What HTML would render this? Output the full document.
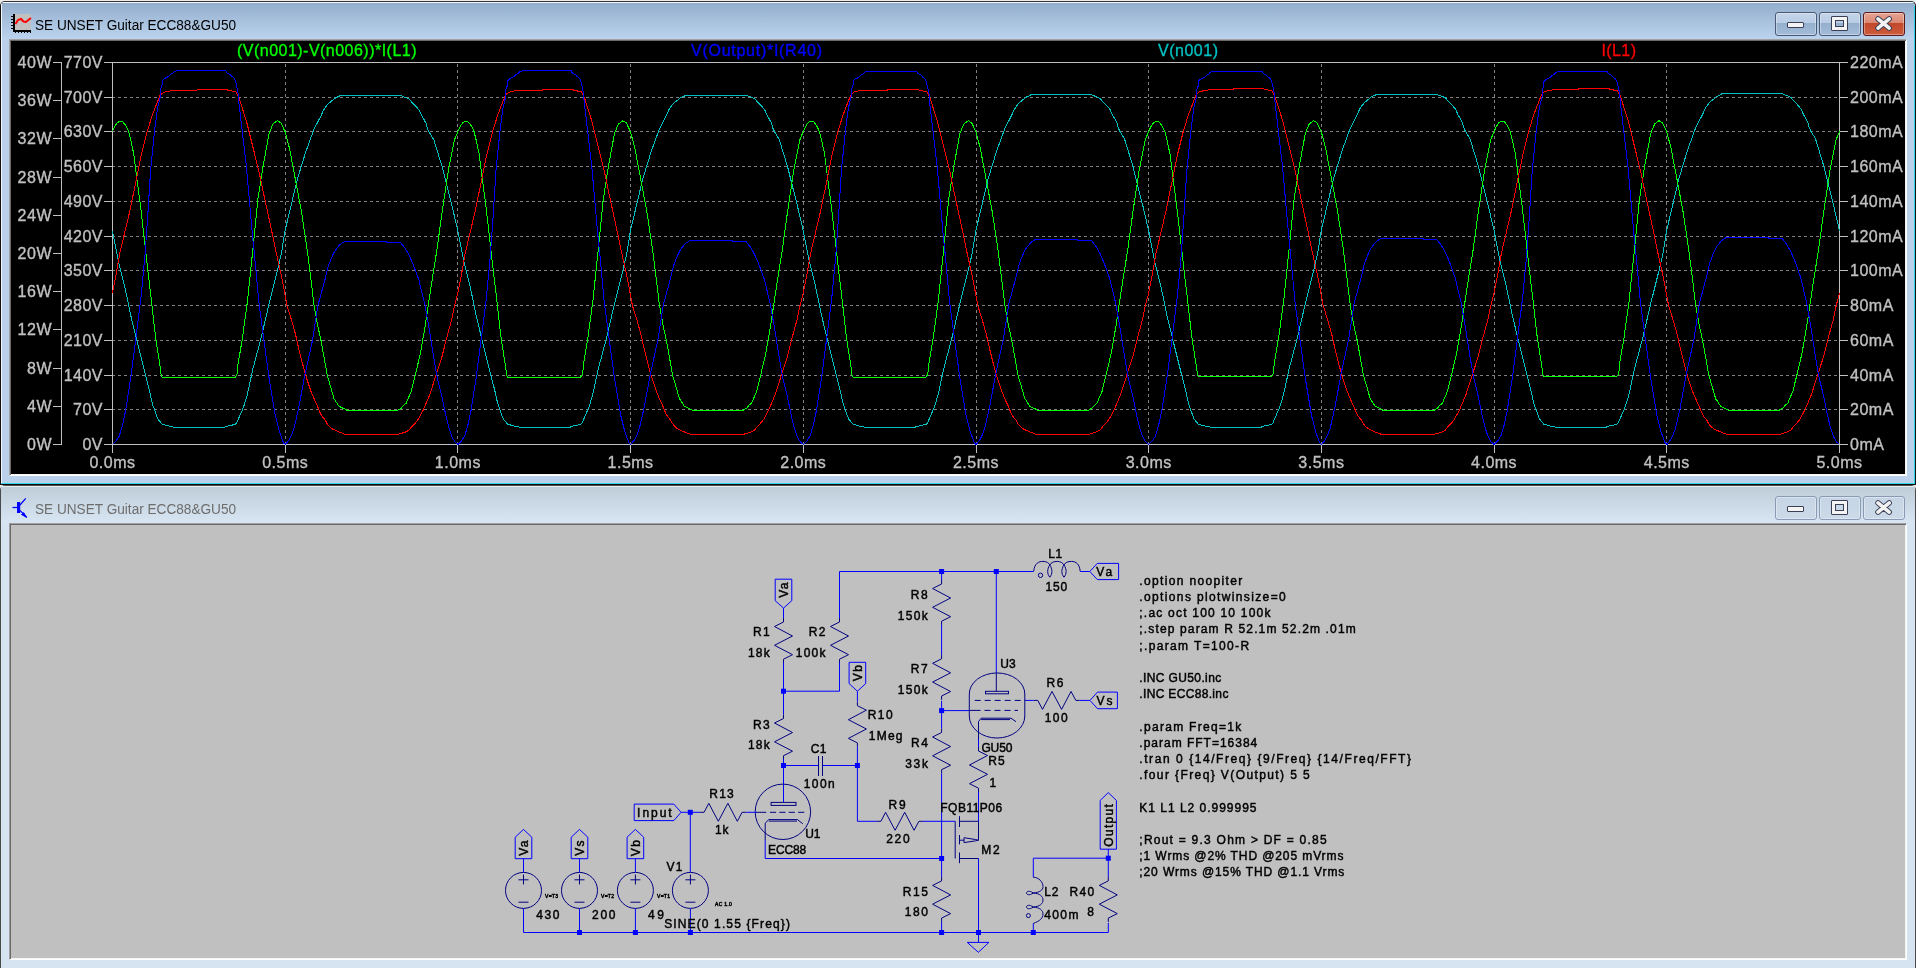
<!DOCTYPE html>
<html><head><meta charset="utf-8"><style>
*{margin:0;padding:0;box-sizing:border-box}
html,body{width:1916px;height:968px;overflow:hidden;background:#ececec;font-family:"Liberation Sans",sans-serif}
.win{position:absolute;left:0;width:1916px;border-radius:5px 5px 0 0}
.btn{position:absolute;width:42px;height:24px;border:1px solid #4a5a75;border-radius:3px;box-shadow:inset 0 0 0 1px rgba(255,255,255,0.35)}
.ic-min{position:absolute;left:11px;top:9px;width:17px;height:6px;background:#f4f4f4;border:1px solid #3a3f55;border-radius:1px}
.ic-max{position:absolute;left:11px;top:3px;width:17px;height:15px;border:1px solid #3a3f55;border-radius:1px;background:transparent;box-shadow:inset 0 0 0 3px #f4f4f4, inset 0 0 0 4px #3a3f55}
.title{position:absolute;left:35px;font-size:15px;white-space:pre;color:#000;transform:scaleX(0.912);transform-origin:0 0}
</style></head><body>
<!-- top window -->
<div style="position:absolute;left:0;top:1px;width:1916px;height:484px;background:#b9d1ea;border:1px solid #111;border-top-color:#333;border-bottom:none;border-radius:5px 5px 0 0;overflow:hidden">
  <div style="position:absolute;left:0;top:0;width:100%;height:1px;background:#f4f8fc"></div>
  <div style="position:absolute;left:0;top:0;width:1px;height:100%;background:#f4f8fc"></div>
  <div style="position:absolute;left:1px;top:1px;right:1px;height:37px;background:linear-gradient(#93aecd,#bcd4ee)"></div>
  <div style="position:absolute;right:0;top:4px;width:1px;bottom:0;background:#2ad6ee"></div>
  <div style="position:absolute;left:0;bottom:1px;width:100%;height:1px;background:#2ad6ee"></div>
  <div style="position:absolute;left:0;bottom:0;width:100%;height:1px;background:#1a0a0a"></div>
</div>
<div style="position:absolute;left:9px;top:39px;width:1898px;height:437px;background:#000;border:1px solid;border-color:#a0a0a0 #fff #fff #a0a0a0;box-shadow:inset 1px 1px 0 #696969, inset -1px -1px 0 #f4f4f4"></div>

<div class="btn" style="left:1775px;top:12px;background:linear-gradient(#c3d4e7 0%,#b9cde5 45%,#94afcd 46%,#a4bcd8 100%);border-color:#4a5a75"><div class="ic-min"></div></div>
<div class="btn" style="left:1819px;top:12px;background:linear-gradient(#c3d4e7 0%,#b9cde5 45%,#94afcd 46%,#a4bcd8 100%);border-color:#4a5a75"><div class="ic-max"></div></div>
<div class="btn" style="left:1863px;top:12px;width:42px;background:linear-gradient(#e8a493 0%,#d88872 45%,#c2472b 46%,#cd5c3c 100%);border-color:#5a1a1a"><svg width="40" height="22" style="position:absolute;left:0;top:0"><path d="M14,5.9 L25.2,15.1 M25.2,5.9 L14,15.1" stroke="#3a3f55" stroke-width="5.5" stroke-linecap="round"/><path d="M14,5.9 L25.2,15.1 M25.2,5.9 L14,15.1" stroke="#f2f2f2" stroke-width="3.6" stroke-linecap="round"/></svg></div>

<!-- bottom window -->
<div style="position:absolute;left:0;top:485px;width:1916px;height:483px;background:#d6e4f2;border:1px solid #4a4a4a;border-bottom:none;border-radius:5px 5px 0 0"></div>
<div style="position:absolute;left:1px;top:486px;width:1914px;height:1px;background:#e8eef4;border-radius:4px 4px 0 0"></div>
<div style="position:absolute;left:1px;top:487px;width:1914px;height:36px;background:linear-gradient(#bfcdd9,#d8e6f3)"></div>
<div style="position:absolute;left:9px;top:523px;width:1898px;height:437px;background:#c0c0c0;border:1px solid;border-color:#a0a0a0 #fff #fff #a0a0a0;box-shadow:inset 1px 1px 0 #696969, inset -1px -1px 0 #f4f4f4"></div>

<div class="btn" style="left:1775px;top:496px;background:linear-gradient(#c6d5e5 0%,#cbd9e8 100%);border-color:#8a9ab5"><div class="ic-min"></div></div>
<div class="btn" style="left:1819px;top:496px;background:linear-gradient(#c6d5e5 0%,#cbd9e8 100%);border-color:#8a9ab5"><div class="ic-max"></div></div>
<div class="btn" style="left:1863px;top:496px;width:42px;background:linear-gradient(#c6d5e5 0%,#cbd9e8 100%);border-color:#8a9ab5"><svg width="40" height="22" style="position:absolute;left:0;top:0"><path d="M14,5.9 L25.2,15.1 M25.2,5.9 L14,15.1" stroke="#3a3f55" stroke-width="5.5" stroke-linecap="round"/><path d="M14,5.9 L25.2,15.1 M25.2,5.9 L14,15.1" stroke="#f2f2f2" stroke-width="3.6" stroke-linecap="round"/></svg></div>

<svg width="1916" height="968" style="position:absolute;left:0;top:0;will-change:transform">
<g style="font-family:'Liberation Sans',sans-serif;font-size:15.4px">
<text x="0" y="0" transform="translate(35,29.8) scale(0.885,1)" fill="#000">SE UNSET Guitar ECC88&amp;GU50</text>
<text x="0" y="0" transform="translate(35,513.8) scale(0.885,1)" fill="#6d6d6d">SE UNSET Guitar ECC88&amp;GU50</text>
</g>
<!-- plot icon -->
<g>
<rect x="15" y="14" width="16" height="16" fill="#c0c0c0"/>
<path d="M14,14V31H31" stroke="#000" stroke-width="2" fill="none"/>
<path d="M11,16.5h2M11,19.5h2M11,22.5h2M11,25.5h2M11,28.5h2M15.5,33v-2M18.5,33v-2M21.5,33v-2M24.5,33v-2M27.5,33v-2M30.5,33v-2" stroke="#000" stroke-width="1" fill="none"/>
<path d="M15.5,24 L18,20 L21,19 L23.5,21.5 L26,22 L29,19.5 L31,18" stroke="#ff0000" stroke-width="2" fill="none"/>
</g>
<!-- schematic icon -->
<g stroke="#0000ff" fill="none">
<path d="M12.5,507.5H17.5" stroke-width="1.3"/>
<rect x="17" y="502" width="3.2" height="11" fill="#0000ff" stroke="none"/>
<path d="M20,505L25.8,498.4M20,510.3L26.9,517.5" stroke-width="1.2"/>
<path d="M21.5,514.5l4.5,2.5l-2.2,-4.3z" fill="#0000ff" stroke-width="1"/>
</g>
<path d="M112,97.5H1839M112,131.5H1839M112,166.5H1839M112,201.5H1839M112,236.5H1839M112,270.5H1839M112,305.5H1839M112,340.5H1839M112,375.5H1839M112,409.5H1839" stroke="#808080" stroke-width="1" stroke-dasharray="3,3" fill="none" shape-rendering="crispEdges"/>
<path d="M285.5,62V444M457.5,62V444M630.5,62V444M803.5,62V444M976.5,62V444M1148.5,62V444M1321.5,62V444M1494.5,62V444M1666.5,62V444" stroke="#808080" stroke-width="1" stroke-dasharray="3,3" stroke-dashoffset="4" fill="none" shape-rendering="crispEdges"/>
<path d="M112.5,62.5H1839.5V444.5H112.5ZM104,62.5H112.5M1839.5,62.5H1848M104,97.5H112.5M1839.5,97.5H1848M104,131.5H112.5M1839.5,131.5H1848M104,166.5H112.5M1839.5,166.5H1848M104,201.5H112.5M1839.5,201.5H1848M104,236.5H112.5M1839.5,236.5H1848M104,270.5H112.5M1839.5,270.5H1848M104,305.5H112.5M1839.5,305.5H1848M104,340.5H112.5M1839.5,340.5H1848M104,375.5H112.5M1839.5,375.5H1848M104,409.5H112.5M1839.5,409.5H1848M104,444.5H112.5M1839.5,444.5H1848M53,62.5H61.5M53,100.5H61.5M53,138.5H61.5M53,177.5H61.5M53,215.5H61.5M53,253.5H61.5M53,291.5H61.5M53,329.5H61.5M53,368.5H61.5M53,406.5H61.5M53,444.5H61.5M61.5,62.5V444.5M112.5,444.5V453M285.5,444.5V453M457.5,444.5V453M630.5,444.5V453M803.5,444.5V453M976.5,444.5V453M1148.5,444.5V453M1321.5,444.5V453M1494.5,444.5V453M1666.5,444.5V453M1839.5,444.5V453" stroke="#c0c0c0" stroke-width="1" fill="none" shape-rendering="crispEdges"/>
<g fill="#c0c0c0" stroke="#c0c0c0" stroke-width="0.35" style="font-family:'Liberation Sans',sans-serif;font-size:16px;letter-spacing:0.5px"><text x="103" y="68" text-anchor="end">770V</text><text x="1850" y="68">220mA</text><text x="103" y="103" text-anchor="end">700V</text><text x="1850" y="103">200mA</text><text x="103" y="137" text-anchor="end">630V</text><text x="1850" y="137">180mA</text><text x="103" y="172" text-anchor="end">560V</text><text x="1850" y="172">160mA</text><text x="103" y="207" text-anchor="end">490V</text><text x="1850" y="207">140mA</text><text x="103" y="242" text-anchor="end">420V</text><text x="1850" y="242">120mA</text><text x="103" y="276" text-anchor="end">350V</text><text x="1850" y="276">100mA</text><text x="103" y="311" text-anchor="end">280V</text><text x="1850" y="311">80mA</text><text x="103" y="346" text-anchor="end">210V</text><text x="1850" y="346">60mA</text><text x="103" y="381" text-anchor="end">140V</text><text x="1850" y="381">40mA</text><text x="103" y="415" text-anchor="end">70V</text><text x="1850" y="415">20mA</text><text x="103" y="450" text-anchor="end">0V</text><text x="1850" y="450">0mA</text><text x="52" y="68" text-anchor="end">40W</text><text x="52" y="106" text-anchor="end">36W</text><text x="52" y="144" text-anchor="end">32W</text><text x="52" y="183" text-anchor="end">28W</text><text x="52" y="221" text-anchor="end">24W</text><text x="52" y="259" text-anchor="end">20W</text><text x="52" y="297" text-anchor="end">16W</text><text x="52" y="335" text-anchor="end">12W</text><text x="52" y="374" text-anchor="end">8W</text><text x="52" y="412" text-anchor="end">4W</text><text x="52" y="450" text-anchor="end">0W</text><text x="112.5" y="468" text-anchor="middle">0.0ms</text><text x="285.2" y="468" text-anchor="middle">0.5ms</text><text x="457.9" y="468" text-anchor="middle">1.0ms</text><text x="630.6" y="468" text-anchor="middle">1.5ms</text><text x="803.3" y="468" text-anchor="middle">2.0ms</text><text x="976.0" y="468" text-anchor="middle">2.5ms</text><text x="1148.7" y="468" text-anchor="middle">3.0ms</text><text x="1321.4" y="468" text-anchor="middle">3.5ms</text><text x="1494.1" y="468" text-anchor="middle">4.0ms</text><text x="1666.8" y="468" text-anchor="middle">4.5ms</text><text x="1839.5" y="468" text-anchor="middle">5.0ms</text></g>
<g style="font-family:'Liberation Sans',sans-serif;font-size:16px;letter-spacing:0.5px" stroke-width="0.35"><text x="237" y="56" fill="#00ff00" stroke="#00ff00" textLength="180" lengthAdjust="spacing">(V(n001)-V(n006))*I(L1)</text><text x="691" y="56" fill="#0000ff" stroke="#0000ff" textLength="131.5" lengthAdjust="spacing">V(Output)*I(R40)</text><text x="1158" y="56" fill="#00c0c0" stroke="#00c0c0" textLength="60.5" lengthAdjust="spacing">V(n001)</text><text x="1601.5" y="56" fill="#ff0000" stroke="#ff0000" textLength="35" lengthAdjust="spacing">I(L1)</text></g>
<path d="M112.5,231.0 L118.6,262.0 L124.8,286.8 L131.0,316.5 L136.9,340.9 L143.1,365.7 L150.4,394.6 L151.4,399.7 L152.9,405.5 L154.3,409.1 L156.5,415.6 L158.0,419.2 L160.8,422.5 L162.3,424.3 L166.6,425.4 L170.2,426.5 L176.4,427.5 L224.8,427.5 L225.2,426.5 L231.0,425.4 L235.3,424.3 L236.8,422.8 L238.9,417.8 L241.1,412.7 L243.3,407.7 L245.4,401.2 L247.3,394.6 L249.1,386.7 L252.6,369.9 L260.9,338.9 L269.1,303.7 L277.4,270.7 L281.5,253.0 L285.0,231.0 L297.4,179.0 L305.7,152.1 L313.9,129.4 L320.3,117.1 L321.7,114.3 L323.4,110.3 L325.7,106.8 L328.6,103.4 L330.9,101.6 L334.6,98.5 L336.6,97.3 L338.9,96.5 L340.1,95.5 L400.9,95.5 L402.7,96.5 L406.1,97.6 L409.6,99.4 L411.3,101.6 L416.4,106.8 L419.3,110.3 L421.6,115.4 L423.9,119.4 L426.2,123.5 L427.3,128.1 L429.4,132.6 L433.8,139.7 L442.1,166.6 L448.3,191.4 L452.0,206.0 L457.9,231.0 L464.0,262.0 L470.2,286.8 L476.4,316.5 L482.3,340.9 L488.5,365.7 L495.8,394.6 L496.8,399.7 L498.3,405.5 L499.7,409.1 L501.9,415.6 L503.4,419.2 L506.2,422.5 L507.7,424.3 L512.0,425.4 L515.6,426.5 L521.8,427.5 L570.2,427.5 L570.6,426.5 L576.4,425.4 L580.7,424.3 L582.2,422.8 L584.3,417.8 L586.5,412.7 L588.7,407.7 L590.8,401.2 L592.7,394.6 L594.5,386.7 L598.0,369.9 L606.3,338.9 L614.5,303.7 L622.8,270.7 L626.9,253.0 L630.4,230.9 L642.8,178.8 L651.1,151.8 L659.3,129.1 L665.7,116.8 L667.1,113.9 L668.8,109.9 L671.1,106.4 L674.0,103.0 L676.3,101.2 L680.0,98.1 L682.0,96.9 L684.3,96.1 L685.5,95.1 L746.3,95.1 L748.1,96.1 L751.5,97.2 L755.0,99.0 L756.7,101.2 L761.8,106.4 L764.7,109.9 L767.0,115.0 L769.3,119.1 L771.6,123.2 L772.7,127.8 L774.8,132.3 L779.2,139.4 L787.5,166.4 L793.7,191.2 L797.4,205.9 L803.3,230.9 L809.4,262.0 L815.6,286.8 L821.8,316.5 L827.7,340.9 L833.9,365.7 L841.2,394.6 L842.2,399.7 L843.7,405.5 L845.1,409.1 L847.3,415.6 L848.8,419.2 L851.6,422.5 L853.1,424.3 L857.4,425.4 L861.0,426.5 L867.2,427.5 L915.6,427.5 L916.0,426.5 L921.8,425.4 L926.1,424.3 L927.6,422.8 L929.7,417.8 L931.9,412.7 L934.1,407.7 L936.2,401.2 L938.1,394.6 L939.9,386.7 L943.4,369.9 L951.7,338.9 L959.9,303.7 L968.2,270.7 L972.3,253.0 L975.8,230.9 L988.2,178.6 L996.5,151.6 L1004.7,128.8 L1011.1,116.4 L1012.5,113.6 L1014.2,109.6 L1016.5,106.1 L1019.4,102.6 L1021.7,100.8 L1025.4,97.7 L1027.4,96.5 L1029.7,95.7 L1030.9,94.7 L1091.7,94.7 L1093.5,95.7 L1096.9,96.8 L1100.4,98.6 L1102.1,100.8 L1107.2,106.1 L1110.1,109.6 L1112.4,114.7 L1114.7,118.7 L1117.0,122.8 L1118.1,127.5 L1120.2,132.0 L1124.6,139.1 L1132.9,166.1 L1139.1,191.1 L1142.8,205.7 L1148.7,230.9 L1154.8,262.0 L1161.0,286.8 L1167.2,316.5 L1173.1,340.9 L1179.3,365.7 L1186.6,394.6 L1187.6,399.7 L1189.1,405.5 L1190.5,409.1 L1192.7,415.6 L1194.2,419.2 L1197.0,422.5 L1198.5,424.3 L1202.8,425.4 L1206.4,426.5 L1212.6,427.5 L1261.0,427.5 L1261.4,426.5 L1267.2,425.4 L1271.5,424.3 L1273.0,422.8 L1275.1,417.8 L1277.3,412.7 L1279.5,407.7 L1281.6,401.2 L1283.5,394.6 L1285.3,386.7 L1288.8,369.9 L1297.1,338.9 L1305.3,303.7 L1313.6,270.7 L1317.7,252.9 L1321.2,230.8 L1333.6,178.4 L1341.9,151.3 L1350.1,128.4 L1356.5,116.1 L1357.9,113.2 L1359.6,109.2 L1361.9,105.7 L1364.8,102.3 L1367.1,100.4 L1370.8,97.3 L1372.8,96.1 L1375.1,95.3 L1376.3,94.3 L1437.1,94.3 L1438.9,95.3 L1442.3,96.4 L1445.8,98.2 L1447.5,100.4 L1452.6,105.7 L1455.5,109.2 L1457.8,114.3 L1460.1,118.4 L1462.4,122.5 L1463.5,127.1 L1465.6,131.7 L1470.0,138.8 L1478.3,165.9 L1484.5,190.9 L1488.2,205.6 L1494.1,230.8 L1500.2,262.0 L1506.4,286.8 L1512.6,316.5 L1518.5,340.9 L1524.7,365.7 L1532.0,394.6 L1533.0,399.7 L1534.5,405.5 L1535.9,409.1 L1538.1,415.6 L1539.6,419.2 L1542.4,422.5 L1543.9,424.3 L1548.2,425.4 L1551.8,426.5 L1558.0,427.5 L1606.4,427.5 L1606.8,426.5 L1612.6,425.4 L1616.9,424.3 L1618.4,422.8 L1620.5,417.8 L1622.7,412.7 L1624.9,407.7 L1627.0,401.2 L1628.9,394.6 L1630.7,386.7 L1634.2,369.9 L1642.5,338.9 L1650.7,303.7 L1659.0,270.7 L1663.1,252.9 L1666.6,230.7 L1679.0,178.2 L1687.3,151.0 L1695.5,128.1 L1701.9,115.7 L1703.3,112.9 L1705.0,108.8 L1707.3,105.3 L1710.2,101.9 L1712.5,100.1 L1716.2,96.9 L1718.2,95.7 L1720.5,94.9 L1721.7,93.9 L1782.5,93.9 L1784.3,94.9 L1787.7,96.0 L1791.2,97.8 L1792.9,100.1 L1798.0,105.3 L1800.9,108.8 L1803.2,114.0 L1805.5,118.0 L1807.8,122.2 L1808.9,126.8 L1811.0,131.4 L1815.4,138.5 L1823.7,165.7 L1829.9,190.7 L1833.6,205.5 L1839.5,230.7" stroke="#00c0c0" stroke-width="1" fill="none" stroke-linejoin="round" shape-rendering="crispEdges"/>
<path d="M112.5,131.5 L115.0,126.0 L117.5,122.5 L120.3,121.1 L123.0,122.0 L126.0,126.0 L128.6,131.5 L131.0,141.0 L133.8,154.2 L136.9,179.0 L140.5,206.0 L144.4,240.0 L148.3,274.4 L150.8,295.0 L155.5,336.8 L160.1,366.4 L160.8,371.5 L161.2,375.5 L162.3,377.5 L235.0,377.5 L236.4,375.8 L237.5,371.9 L237.9,365.0 L242.3,338.9 L247.4,301.7 L252.6,252.0 L257.8,199.7 L263.0,166.6 L269.1,133.5 L273.0,124.0 L277.4,120.7 L281.0,123.0 L285.0,131.5 L289.4,148.0 L295.3,179.0 L301.5,212.0 L307.2,250.0 L311.0,280.0 L314.1,305.6 L317.9,326.5 L321.0,340.4 L324.9,362.1 L327.2,375.2 L331.1,388.4 L334.2,399.3 L335.1,400.0 L335.9,401.6 L338.0,404.7 L339.0,406.3 L341.1,407.3 L343.2,408.4 L345.8,409.5 L347.1,410.5 L397.7,410.5 L398.5,409.5 L401.1,408.4 L403.7,405.2 L406.3,403.1 L407.5,400.0 L411.2,391.5 L415.8,372.9 L420.5,352.8 L425.1,326.5 L428.2,305.6 L432.1,280.0 L436.9,250.0 L442.1,212.0 L448.3,170.7 L454.5,139.7 L457.9,131.5 L460.4,126.0 L462.9,122.5 L465.7,121.1 L468.4,122.0 L471.4,126.0 L474.0,131.5 L476.4,141.0 L479.2,154.2 L482.3,179.0 L485.9,206.0 L489.8,240.0 L493.7,274.4 L496.2,295.0 L500.9,336.7 L505.5,366.2 L506.2,371.3 L506.6,375.3 L507.7,377.2 L580.4,377.2 L581.8,375.6 L582.9,371.7 L583.3,364.8 L587.7,338.8 L592.8,301.7 L598.0,252.0 L603.2,199.7 L608.4,166.6 L614.5,133.5 L618.4,124.0 L622.8,120.7 L626.4,123.0 L630.4,131.5 L634.8,148.0 L640.7,179.0 L646.9,212.0 L652.6,250.0 L656.4,280.0 L659.5,305.6 L663.3,326.5 L666.4,340.4 L670.3,362.1 L672.6,375.2 L676.5,388.4 L679.6,399.3 L680.5,400.0 L681.3,401.6 L683.4,404.7 L684.4,406.3 L686.5,407.3 L688.6,408.4 L691.2,409.5 L692.5,410.5 L743.1,410.5 L743.9,409.5 L746.5,408.4 L749.1,405.2 L751.7,403.1 L752.9,400.0 L756.6,391.5 L761.2,372.9 L765.9,352.8 L770.5,326.5 L773.6,305.6 L777.5,280.0 L782.3,250.0 L787.5,212.0 L793.7,170.7 L799.9,139.7 L803.3,131.5 L805.8,126.0 L808.3,122.5 L811.1,121.1 L813.8,122.0 L816.8,126.0 L819.4,131.5 L821.8,141.0 L824.6,154.2 L827.7,179.0 L831.3,206.0 L835.2,240.0 L839.1,274.4 L841.6,295.0 L846.3,336.6 L850.9,366.0 L851.6,371.0 L852.0,375.0 L853.1,377.0 L925.8,377.0 L927.2,375.3 L928.3,371.4 L928.7,364.6 L933.1,338.6 L938.2,301.7 L943.4,252.0 L948.6,199.7 L953.8,166.6 L959.9,133.5 L963.8,124.0 L968.2,120.7 L971.8,123.0 L975.8,131.5 L980.2,148.0 L986.1,179.0 L992.3,212.0 L998.0,250.0 L1001.8,280.0 L1004.9,305.6 L1008.7,326.5 L1011.8,340.4 L1015.7,362.1 L1018.0,375.2 L1021.9,388.4 L1025.0,399.3 L1025.9,400.0 L1026.7,401.6 L1028.8,404.7 L1029.8,406.3 L1031.9,407.3 L1034.0,408.4 L1036.6,409.5 L1037.9,410.5 L1088.5,410.5 L1089.3,409.5 L1091.9,408.4 L1094.5,405.2 L1097.1,403.1 L1098.3,400.0 L1102.0,391.5 L1106.6,372.9 L1111.3,352.8 L1115.9,326.5 L1119.0,305.6 L1122.9,280.0 L1127.7,250.0 L1132.9,212.0 L1139.1,170.7 L1145.3,139.7 L1148.7,131.5 L1151.2,126.0 L1153.7,122.5 L1156.5,121.1 L1159.2,122.0 L1162.2,126.0 L1164.8,131.5 L1167.2,141.0 L1170.0,154.2 L1173.1,179.0 L1176.7,206.0 L1180.6,240.0 L1184.5,274.4 L1187.0,295.0 L1191.7,336.4 L1196.3,365.8 L1197.0,370.8 L1197.4,374.8 L1198.5,376.8 L1271.2,376.8 L1272.6,375.1 L1273.7,371.2 L1274.1,364.4 L1278.5,338.5 L1283.6,301.7 L1288.8,252.0 L1294.0,199.7 L1299.2,166.6 L1305.3,133.5 L1309.2,124.0 L1313.6,120.7 L1317.2,123.0 L1321.2,131.5 L1325.6,148.0 L1331.5,179.0 L1337.7,212.0 L1343.4,250.0 L1347.2,280.0 L1350.3,305.6 L1354.1,326.5 L1357.2,340.4 L1361.1,362.1 L1363.4,375.2 L1367.3,388.4 L1370.4,399.3 L1371.3,400.0 L1372.1,401.6 L1374.2,404.7 L1375.2,406.3 L1377.3,407.3 L1379.4,408.4 L1382.0,409.5 L1383.3,410.5 L1433.9,410.5 L1434.7,409.5 L1437.3,408.4 L1439.9,405.2 L1442.5,403.1 L1443.7,400.0 L1447.4,391.5 L1452.0,372.9 L1456.7,352.8 L1461.3,326.5 L1464.4,305.6 L1468.3,280.0 L1473.1,250.0 L1478.3,212.0 L1484.5,170.7 L1490.7,139.7 L1494.1,131.5 L1496.6,126.0 L1499.1,122.5 L1501.9,121.1 L1504.6,122.0 L1507.6,126.0 L1510.2,131.5 L1512.6,141.0 L1515.4,154.2 L1518.5,179.0 L1522.1,206.0 L1526.0,240.0 L1529.9,274.4 L1532.4,295.0 L1537.1,336.3 L1541.7,365.5 L1542.4,370.6 L1542.8,374.5 L1543.9,376.5 L1616.6,376.5 L1618.0,374.8 L1619.1,371.0 L1619.5,364.2 L1623.9,338.4 L1629.0,301.7 L1634.2,252.0 L1639.4,199.7 L1644.6,166.6 L1650.7,133.5 L1654.6,124.0 L1659.0,120.7 L1662.6,123.0 L1666.6,131.5 L1671.0,148.0 L1676.9,179.0 L1683.1,212.0 L1688.8,250.0 L1692.6,280.0 L1695.7,305.6 L1699.5,326.5 L1702.6,340.4 L1706.5,362.1 L1708.8,375.2 L1712.7,388.4 L1715.8,399.3 L1716.7,400.0 L1717.5,401.6 L1719.6,404.7 L1720.6,406.3 L1722.7,407.3 L1724.8,408.4 L1727.4,409.5 L1728.7,410.5 L1779.3,410.5 L1780.1,409.5 L1782.7,408.4 L1785.3,405.2 L1787.9,403.1 L1789.1,400.0 L1792.8,391.5 L1797.4,372.9 L1802.1,352.8 L1806.7,326.5 L1809.8,305.6 L1813.7,280.0 L1818.5,250.0 L1823.7,212.0 L1829.9,170.7 L1836.1,139.7 L1839.5,131.5" stroke="#00ff00" stroke-width="1" fill="none" stroke-linejoin="round" shape-rendering="crispEdges"/>
<path d="M112.5,293.0 L116.1,274.4 L119.8,253.3 L124.8,232.2 L129.8,211.2 L135.8,182.0 L141.0,156.3 L147.2,131.5 L152.4,115.0 L157.0,103.0 L160.0,95.5 L161.3,94.2 L163.3,92.5 L167.1,91.5 L172.9,90.5 L196.7,90.5 L197.2,89.5 L227.6,89.5 L228.0,90.5 L231.8,90.5 L232.2,91.5 L235.6,91.5 L236.4,93.0 L237.7,95.0 L238.5,96.7 L239.3,98.8 L246.4,121.1 L252.6,145.9 L258.8,170.7 L264.0,195.5 L271.2,228.6 L276.4,253.4 L282.3,280.0 L287.0,305.6 L291.6,320.3 L295.5,334.2 L298.6,348.1 L302.5,363.6 L305.6,375.2 L311.0,391.5 L315.5,402.1 L317.1,405.2 L318.1,407.8 L320.2,413.0 L322.3,416.7 L323.9,418.5 L325.4,420.4 L327.0,423.5 L328.6,425.6 L330.1,427.1 L331.7,428.4 L333.3,429.5 L335.4,430.3 L337.4,431.3 L340.1,432.4 L343.2,433.5 L345.3,434.5 L397.7,434.5 L400.6,433.5 L404.8,432.4 L406.9,431.3 L409.0,430.3 L411.5,427.0 L414.5,424.0 L418.2,419.4 L423.6,409.3 L429.8,394.6 L436.0,375.2 L442.2,355.9 L446.0,340.4 L451.5,320.3 L454.6,305.6 L457.9,293.0 L461.5,274.4 L465.2,253.3 L470.2,232.2 L475.2,211.1 L481.2,181.9 L486.4,156.1 L492.6,131.3 L497.8,114.8 L502.4,102.8 L505.4,95.3 L506.7,94.0 L508.7,92.3 L512.5,91.3 L518.3,90.3 L542.1,90.3 L542.6,89.2 L573.0,89.2 L573.4,90.3 L577.2,90.3 L577.6,91.3 L581.0,91.3 L581.8,92.8 L583.1,94.8 L583.9,96.5 L584.7,98.6 L591.8,120.9 L598.0,145.7 L604.2,170.6 L609.4,195.4 L616.6,228.6 L621.8,253.4 L627.7,280.0 L632.4,305.6 L637.0,320.3 L640.9,334.2 L644.0,348.1 L647.9,363.6 L651.0,375.2 L656.4,391.5 L660.9,402.1 L662.5,405.2 L663.5,407.8 L665.6,413.0 L667.7,416.7 L669.3,418.5 L670.8,420.4 L672.4,423.5 L674.0,425.6 L675.5,427.1 L677.1,428.4 L678.7,429.5 L680.8,430.3 L682.8,431.3 L685.5,432.4 L688.6,433.5 L690.7,434.5 L743.1,434.5 L746.0,433.5 L750.2,432.4 L752.3,431.3 L754.4,430.3 L756.9,427.0 L759.9,424.0 L763.6,419.4 L769.0,409.3 L775.2,394.6 L781.4,375.2 L787.6,355.9 L791.4,340.4 L796.9,320.3 L800.0,305.6 L803.3,293.0 L806.9,274.4 L810.6,253.3 L815.6,232.1 L820.6,211.1 L826.6,181.8 L831.8,156.0 L838.0,131.1 L843.2,114.6 L847.8,102.5 L850.8,95.0 L852.1,93.7 L854.1,92.0 L857.9,91.0 L863.7,90.0 L887.5,90.0 L888.0,89.0 L918.4,89.0 L918.8,90.0 L922.6,90.0 L923.0,91.0 L926.4,91.0 L927.2,92.5 L928.5,94.5 L929.3,96.2 L930.1,98.3 L937.2,120.7 L943.4,145.6 L949.6,170.4 L954.8,195.3 L962.0,228.5 L967.2,253.4 L973.1,280.0 L977.8,305.6 L982.4,320.3 L986.3,334.2 L989.4,348.1 L993.3,363.6 L996.4,375.2 L1001.8,391.5 L1006.3,402.1 L1007.9,405.2 L1008.9,407.8 L1011.0,413.0 L1013.1,416.7 L1014.7,418.5 L1016.2,420.4 L1017.8,423.5 L1019.4,425.6 L1020.9,427.1 L1022.5,428.4 L1024.1,429.5 L1026.2,430.3 L1028.2,431.3 L1030.9,432.4 L1034.0,433.5 L1036.1,434.5 L1088.5,434.5 L1091.4,433.5 L1095.6,432.4 L1097.7,431.3 L1099.8,430.3 L1102.3,427.0 L1105.3,424.0 L1109.0,419.4 L1114.4,409.3 L1120.6,394.6 L1126.8,375.2 L1133.0,355.9 L1136.8,340.4 L1142.3,320.3 L1145.4,305.6 L1148.7,293.0 L1152.3,274.4 L1156.0,253.3 L1161.0,232.1 L1166.0,211.0 L1172.0,181.7 L1177.2,155.8 L1183.4,130.9 L1188.6,114.4 L1193.2,102.3 L1196.2,94.8 L1197.5,93.5 L1199.5,91.8 L1203.3,90.8 L1209.1,89.8 L1232.9,89.8 L1233.4,88.8 L1263.8,88.8 L1264.2,89.8 L1268.0,89.8 L1268.4,90.8 L1271.8,90.8 L1272.6,92.3 L1273.9,94.3 L1274.7,96.0 L1275.5,98.1 L1282.6,120.5 L1288.8,145.4 L1295.0,170.3 L1300.2,195.2 L1307.4,228.5 L1312.6,253.4 L1318.5,280.0 L1323.2,305.6 L1327.8,320.3 L1331.7,334.2 L1334.8,348.1 L1338.7,363.6 L1341.8,375.2 L1347.2,391.5 L1351.7,402.1 L1353.3,405.2 L1354.3,407.8 L1356.4,413.0 L1358.5,416.7 L1360.1,418.5 L1361.6,420.4 L1363.2,423.5 L1364.8,425.6 L1366.3,427.1 L1367.9,428.4 L1369.5,429.5 L1371.6,430.3 L1373.6,431.3 L1376.3,432.4 L1379.4,433.5 L1381.5,434.5 L1433.9,434.5 L1436.8,433.5 L1441.0,432.4 L1443.1,431.3 L1445.2,430.3 L1447.7,427.0 L1450.7,424.0 L1454.4,419.4 L1459.8,409.3 L1466.0,394.6 L1472.2,375.2 L1478.4,355.9 L1482.2,340.4 L1487.7,320.3 L1490.8,305.6 L1494.1,293.0 L1497.7,274.4 L1501.4,253.3 L1506.4,232.0 L1511.4,210.9 L1517.4,181.5 L1522.6,155.7 L1528.8,130.7 L1534.0,114.1 L1538.6,102.1 L1541.6,94.5 L1542.9,93.2 L1544.9,91.5 L1548.7,90.5 L1554.5,89.5 L1578.3,89.5 L1578.8,88.5 L1609.2,88.5 L1609.6,89.5 L1613.4,89.5 L1613.8,90.5 L1617.2,90.5 L1618.0,92.0 L1619.3,94.0 L1620.1,95.7 L1620.9,97.9 L1628.0,120.3 L1634.2,145.2 L1640.4,170.2 L1645.6,195.1 L1652.8,228.4 L1658.0,253.4 L1663.9,280.0 L1668.6,305.6 L1673.2,320.3 L1677.1,334.2 L1680.2,348.1 L1684.1,363.6 L1687.2,375.2 L1692.6,391.5 L1697.1,402.1 L1698.7,405.2 L1699.7,407.8 L1701.8,413.0 L1703.9,416.7 L1705.5,418.5 L1707.0,420.4 L1708.6,423.5 L1710.2,425.6 L1711.7,427.1 L1713.3,428.4 L1714.9,429.5 L1717.0,430.3 L1719.0,431.3 L1721.7,432.4 L1724.8,433.5 L1726.9,434.5 L1779.3,434.5 L1782.2,433.5 L1786.4,432.4 L1788.5,431.3 L1790.6,430.3 L1793.1,427.0 L1796.1,424.0 L1799.8,419.4 L1805.2,409.3 L1811.4,394.6 L1817.6,375.2 L1823.8,355.9 L1827.6,340.4 L1833.1,320.3 L1836.2,305.6 L1839.5,293.0" stroke="#ff0000" stroke-width="1" fill="none" stroke-linejoin="round" shape-rendering="crispEdges"/>
<path d="M112.5,444.5 L116.0,441.0 L119.3,436.0 L122.5,425.0 L125.5,411.2 L130.7,378.1 L135.8,338.9 L141.0,297.5 L145.0,255.0 L147.8,215.0 L150.6,170.0 L154.5,131.5 L157.5,108.0 L160.4,96.0 L160.4,89.0 L161.5,86.7 L162.3,84.6 L162.3,80.5 L163.1,79.6 L164.6,78.4 L166.7,77.5 L168.4,76.5 L170.4,74.4 L172.5,73.4 L174.2,71.5 L177.1,70.5 L225.8,70.5 L226.4,72.1 L227.6,73.4 L230.1,74.4 L231.8,76.5 L233.5,77.5 L234.7,79.2 L235.6,81.7 L236.4,85.0 L237.2,88.4 L238.3,94.2 L238.5,99.2 L242.3,131.5 L246.4,166.6 L249.5,201.7 L252.6,236.9 L254.5,255.0 L258.8,301.7 L264.0,340.9 L269.1,378.1 L275.3,415.3 L279.5,432.0 L283.6,443.0 L285.3,444.5 L289.0,440.0 L291.5,435.0 L293.9,428.7 L298.6,408.5 L304.8,375.2 L312.5,340.4 L317.9,305.6 L324.9,280.0 L328.0,267.0 L331.0,259.0 L333.5,253.5 L335.5,250.0 L337.5,247.5 L339.5,245.0 L341.5,243.5 L343.2,242.5 L344.3,241.5 L386.8,241.5 L387.0,242.5 L400.6,242.5 L402.5,245.0 L405.0,248.0 L407.0,251.5 L409.0,255.0 L413.0,264.0 L418.9,280.0 L425.1,305.6 L429.8,332.7 L433.7,357.4 L437.5,379.1 L442.2,397.7 L446.0,416.3 L449.1,428.7 L452.0,437.0 L455.0,442.0 L457.9,444.5 L461.4,441.0 L464.7,436.0 L467.9,425.0 L470.9,411.2 L476.1,378.1 L481.2,339.0 L486.4,297.6 L490.4,255.1 L493.2,215.2 L496.0,170.2 L499.9,131.7 L502.9,108.2 L505.8,96.2 L505.8,89.2 L506.9,86.9 L507.7,84.8 L507.7,80.7 L508.5,79.8 L510.0,78.6 L512.1,77.7 L513.8,76.7 L515.8,74.6 L517.9,73.6 L519.6,71.7 L522.5,70.8 L571.2,70.8 L571.8,72.3 L573.0,73.6 L575.5,74.6 L577.2,76.7 L578.9,77.7 L580.1,79.4 L581.0,81.9 L581.8,85.2 L582.6,88.6 L583.7,94.4 L583.9,99.4 L587.7,131.7 L591.8,166.8 L594.9,201.9 L598.0,237.0 L599.9,255.1 L604.2,301.8 L609.4,341.0 L614.5,378.1 L620.7,415.3 L624.9,432.0 L629.0,443.0 L630.7,444.5 L634.4,440.0 L636.9,435.0 L639.3,428.6 L644.0,408.3 L650.2,374.9 L657.9,339.9 L663.3,304.9 L670.3,279.2 L673.4,266.1 L676.4,258.1 L678.9,252.6 L680.9,249.0 L682.9,246.5 L684.9,244.0 L686.9,242.5 L688.6,241.5 L689.7,240.5 L732.2,240.5 L732.4,241.5 L746.0,241.5 L747.9,244.0 L750.4,247.0 L752.4,250.5 L754.4,254.1 L758.4,263.1 L764.3,279.2 L770.5,304.9 L775.2,332.1 L779.1,357.0 L782.9,378.8 L787.6,397.5 L791.4,416.2 L794.5,428.6 L797.4,437.0 L800.4,442.0 L803.3,444.5 L806.8,441.0 L810.1,436.0 L813.3,425.0 L816.3,411.2 L821.5,378.2 L826.6,339.0 L831.8,297.7 L835.8,255.3 L838.6,215.3 L841.4,170.4 L845.3,131.9 L848.3,108.4 L851.2,96.5 L851.2,89.5 L852.3,87.2 L853.1,85.1 L853.1,81.0 L853.9,80.1 L855.4,78.9 L857.5,78.0 L859.2,77.0 L861.2,74.9 L863.3,73.9 L865.0,72.0 L867.9,71.0 L916.6,71.0 L917.2,72.6 L918.4,73.9 L920.9,74.9 L922.6,77.0 L924.3,78.0 L925.5,79.7 L926.4,82.2 L927.2,85.5 L928.0,88.9 L929.1,94.7 L929.3,99.7 L933.1,131.9 L937.2,167.0 L940.3,202.0 L943.4,237.2 L945.3,255.3 L949.6,301.9 L954.8,341.0 L959.9,378.2 L966.1,415.3 L970.3,432.0 L974.4,443.0 L976.1,444.5 L979.8,440.0 L982.3,434.9 L984.7,428.5 L989.4,408.1 L995.6,374.5 L1003.3,339.4 L1008.7,304.2 L1015.7,278.4 L1018.8,265.3 L1021.8,257.2 L1024.3,251.6 L1026.3,248.1 L1028.3,245.6 L1030.3,243.0 L1032.3,241.5 L1034.0,240.5 L1035.1,239.5 L1077.6,239.5 L1077.8,240.5 L1091.4,240.5 L1093.3,243.0 L1095.8,246.1 L1097.8,249.6 L1099.8,253.1 L1103.8,262.2 L1109.7,278.4 L1115.9,304.2 L1120.6,331.6 L1124.5,356.5 L1128.3,378.5 L1133.0,397.2 L1136.8,416.0 L1139.9,428.5 L1142.8,436.9 L1145.8,442.0 L1148.7,444.5 L1152.2,441.0 L1155.5,436.0 L1158.7,425.0 L1161.7,411.3 L1166.9,378.2 L1172.0,339.1 L1177.2,297.8 L1181.2,255.4 L1184.0,215.5 L1186.8,170.6 L1190.7,132.1 L1193.7,108.7 L1196.6,96.7 L1196.6,89.7 L1197.7,87.4 L1198.5,85.3 L1198.5,81.2 L1199.3,80.3 L1200.8,79.1 L1202.9,78.2 L1204.6,77.2 L1206.6,75.1 L1208.7,74.1 L1210.4,72.2 L1213.3,71.2 L1262.0,71.2 L1262.6,72.8 L1263.8,74.1 L1266.3,75.1 L1268.0,77.2 L1269.7,78.2 L1270.9,79.9 L1271.8,82.4 L1272.6,85.7 L1273.4,89.1 L1274.5,94.9 L1274.7,99.9 L1278.5,132.1 L1282.6,167.2 L1285.7,202.2 L1288.8,237.3 L1290.7,255.4 L1295.0,302.0 L1300.2,341.1 L1305.3,378.2 L1311.5,415.4 L1315.7,432.0 L1319.8,443.0 L1321.5,444.5 L1325.2,439.9 L1327.7,434.9 L1330.1,428.5 L1334.8,408.0 L1341.0,374.2 L1348.7,338.9 L1354.1,303.5 L1361.1,277.6 L1364.2,264.4 L1367.2,256.3 L1369.7,250.7 L1371.7,247.1 L1373.7,244.6 L1375.7,242.1 L1377.7,240.5 L1379.4,239.5 L1380.5,238.5 L1423.0,238.5 L1423.2,239.5 L1436.8,239.5 L1438.7,242.1 L1441.2,245.1 L1443.2,248.6 L1445.2,252.2 L1449.2,261.3 L1455.1,277.6 L1461.3,303.5 L1466.0,331.0 L1469.9,356.1 L1473.7,378.1 L1478.4,397.0 L1482.2,415.9 L1485.3,428.5 L1488.2,436.9 L1491.2,442.0 L1494.1,444.5 L1497.6,441.0 L1500.9,436.0 L1504.1,425.1 L1507.1,411.3 L1512.3,378.3 L1517.4,339.2 L1522.6,297.9 L1526.6,255.5 L1529.4,215.6 L1532.2,170.7 L1536.1,132.3 L1539.1,108.9 L1542.0,96.9 L1542.0,90.0 L1543.1,87.7 L1543.9,85.6 L1543.9,81.5 L1544.7,80.6 L1546.2,79.4 L1548.3,78.5 L1550.0,77.5 L1552.0,75.4 L1554.1,74.4 L1555.8,72.5 L1558.7,71.5 L1607.4,71.5 L1608.0,73.1 L1609.2,74.4 L1611.7,75.4 L1613.4,77.5 L1615.1,78.5 L1616.3,80.2 L1617.2,82.7 L1618.0,86.0 L1618.8,89.4 L1619.9,95.1 L1620.1,100.1 L1623.9,132.3 L1628.0,167.3 L1631.1,202.3 L1634.2,237.5 L1636.1,255.5 L1640.4,302.1 L1645.6,341.2 L1650.7,378.3 L1656.9,415.4 L1661.1,432.0 L1665.2,443.0 L1666.9,444.5 L1670.6,439.9 L1673.1,434.8 L1675.5,428.4 L1680.2,407.8 L1686.4,373.8 L1694.1,338.3 L1699.5,302.9 L1706.5,276.8 L1709.6,263.5 L1712.6,255.3 L1715.1,249.7 L1717.1,246.2 L1719.1,243.6 L1721.1,241.1 L1723.1,239.5 L1724.8,238.5 L1725.9,237.5 L1768.4,237.5 L1768.6,238.5 L1782.2,238.5 L1784.1,241.1 L1786.6,244.1 L1788.6,247.7 L1790.6,251.3 L1794.6,260.4 L1800.5,276.8 L1806.7,302.9 L1811.4,330.5 L1815.3,355.7 L1819.1,377.8 L1823.8,396.8 L1827.6,415.7 L1830.7,428.4 L1833.6,436.9 L1836.6,442.0 L1839.5,444.5" stroke="#0000ff" stroke-width="1" fill="none" stroke-linejoin="round" shape-rendering="crispEdges"/>
<g shape-rendering="auto"><path d="M839.5,618 L839.5,571.5 L1033.7,571.5" stroke="#0000ff" stroke-width="1" fill="none" />
<path d="M1080.2,571.5 L1089.8,571.5" stroke="#0000ff" stroke-width="1" fill="none" />
<rect x="939.1" y="569.0" width="5" height="5" fill="#0000ff"/>
<rect x="993.8" y="569.0" width="5" height="5" fill="#0000ff"/>
<path d="M783.5,608 L783.5,618" stroke="#0000ff" stroke-width="1" fill="none" />
<path d="M783.5,618.0 L783.5,622.0 L774.5,626.5 L792.5,636.0 L774.5,645.3 L792.5,654.7 L783.5,659.2 L783.5,663.0" stroke="#000080" stroke-width="1" fill="none" />
<path d="M783.5,663 L783.5,714.5" stroke="#0000ff" stroke-width="1" fill="none" />
<path d="M783.5,714.5 L783.5,718.5 L774.5,723.0 L792.5,732.5 L774.5,741.8 L792.5,751.2 L783.5,755.7 L783.5,759.5" stroke="#000080" stroke-width="1" fill="none" />
<path d="M783.5,759 L783.5,802.4" stroke="#0000ff" stroke-width="1" fill="none" />
<rect x="781.0" y="688.7" width="5" height="5" fill="#0000ff"/>
<path d="M783.5,691.2 L839.5,691.2 L839.5,663" stroke="#0000ff" stroke-width="1" fill="none" />
<path d="M839.5,618.0 L839.5,622.0 L830.5,626.5 L848.5,636.0 L830.5,645.3 L848.5,654.7 L839.5,659.2 L839.5,663.0" stroke="#000080" stroke-width="1" fill="none" />
<rect x="781.0" y="763.0" width="5" height="5" fill="#0000ff"/>
<path d="M783.5,765.5 L818.4,765.5" stroke="#0000ff" stroke-width="1" fill="none" />
<path d="M822.7,765.5 L857.4,765.5" stroke="#0000ff" stroke-width="1" fill="none" />
<path d="M818.5,756V776M822.5,756V776" stroke="#000080" stroke-width="1" fill="none" />
<rect x="854.9" y="763.0" width="5" height="5" fill="#0000ff"/>
<path d="M857.4,691.2 L865.6999999999999,683.6 V662.3 H849.1 V683.6 Z" stroke="#0000ff" stroke-width="1" fill="none" />
<path d="M857.4,691.2 L857.4,701.5" stroke="#0000ff" stroke-width="1" fill="none" />
<path d="M857.4,701.7 L857.4,705.7 L866.4,710.2 L848.4,719.7 L866.4,729.0 L848.4,738.4 L857.4,742.9 L857.4,746.7" stroke="#000080" stroke-width="1" fill="none" />
<path d="M857.4,746.5 L857.4,821.3 L876.9,821.3" stroke="#0000ff" stroke-width="1" fill="none" />
<path d="M876.9,821.3 L880.9,821.3 L885.6,812.3 L895.1,830.3 L904.7,812.3 L914.1,830.3 L918.9,821.3 L922.9,821.3" stroke="#000080" stroke-width="1" fill="none" />
<path d="M923,821.3 L955.2,821.3" stroke="#0000ff" stroke-width="1" fill="none" />
<path d="M783.5,608.1 L791.8,600.7 V579.2 H775.2 V600.7 Z" stroke="#0000ff" stroke-width="1" fill="none" />
<path d="M941.6,580.0 L941.6,584.0 L932.6,588.5 L950.6,598.0 L932.6,607.3 L950.6,616.7 L941.6,621.2 L941.6,625.0" stroke="#000080" stroke-width="1" fill="none" />
<path d="M941.6,571.5 L941.6,580" stroke="#0000ff" stroke-width="1" fill="none" />
<path d="M941.6,625 L941.6,654.8" stroke="#0000ff" stroke-width="1" fill="none" />
<path d="M941.6,654.8 L941.6,658.8 L932.6,663.3 L950.6,672.8 L932.6,682.1 L950.6,691.5 L941.6,696.0 L941.6,699.8" stroke="#000080" stroke-width="1" fill="none" />
<path d="M941.6,700.8 L941.6,728.5" stroke="#0000ff" stroke-width="1" fill="none" />
<rect x="939.1" y="708.1" width="5" height="5" fill="#0000ff"/>
<path d="M941.6,710.6 L969.3,710.6" stroke="#0000ff" stroke-width="1" fill="none" />
<path d="M941.6,728.5 L941.6,732.5 L932.6,737.0 L950.6,746.5 L932.6,755.8 L950.6,765.2 L941.6,769.7 L941.6,773.5" stroke="#000080" stroke-width="1" fill="none" />
<path d="M941.6,773.5 L941.6,876.9" stroke="#0000ff" stroke-width="1" fill="none" />
<rect x="939.1" y="856.0" width="5" height="5" fill="#0000ff"/>
<path d="M941.6,876.9 L941.6,880.9 L932.6,885.4 L950.6,894.9 L932.6,904.2 L950.6,913.6 L941.6,918.1 L941.6,921.9" stroke="#000080" stroke-width="1" fill="none" />
<path d="M941.6,922 L941.6,932.5" stroke="#0000ff" stroke-width="1" fill="none" />
<rect x="939.1" y="930.0" width="5" height="5" fill="#0000ff"/>
<path d="M996.3,571.5 L996.3,673.3" stroke="#0000ff" stroke-width="1" fill="none" />
<path d="M1024.8,700.4 L1033.8,700.4" stroke="#0000ff" stroke-width="1" fill="none" />
<path d="M1033.8,700.4 L1037.8,700.4 L1042.5,709.4 L1052.0,691.4 L1061.6,709.4 L1071.0,691.4 L1075.8,700.4 L1079.8,700.4" stroke="#000080" stroke-width="1" fill="none" />
<path d="M1079.8,700.4 L1090,700.4" stroke="#0000ff" stroke-width="1" fill="none" />
<path d="M1090,700.4 L1097.5,692.1 H1117.4 V708.6999999999999 H1097.5 Z" stroke="#0000ff" stroke-width="1" fill="none" />
<path d="M1089.8,571.5 L1097.3,563.4 H1118.6 V579.6 H1097.3 Z" stroke="#0000ff" stroke-width="1" fill="none" />
<path d="M1033.7,571.3 C1034.5,563 1039,561.4 1043,561.4 C1046.5,561.4 1049,563 1049.8,565 M1049.8,565 C1047,569 1047,574 1049.8,577.2 C1052.6,574 1052.6,569 1049.8,565 M1049.8,565 C1051,562.5 1054,561.4 1057.2,561.4 C1060.5,561.4 1063,563 1064,565 M1064,565 C1061.2,569 1061.2,574 1064,577.2 C1066.8,574 1066.8,569 1064,565 M1064,565 C1065,562.5 1068,561.4 1071.5,561.4 C1076,561.4 1079.5,564 1080.2,571.3" stroke="#000080" stroke-width="1" fill="none" />
<circle cx="1040.5" cy="575.3" r="2.2" stroke="#000080" fill="none"/>
<path d="M969.3,694 A27.7,21 0 0 1 1024.8,694 V716 A27.7,22 0 0 1 969.3,716 Z" stroke="#000080" stroke-width="1" fill="none" />
<path d="M996.3,673.3V691.3" stroke="#000080" stroke-width="1" fill="none" />
<rect x="985.5" y="691.3" width="23" height="2.5" stroke="#000080" fill="none"/>
<path d="M974.7,700.4H1024.8" stroke="#000080" stroke-width="1" fill="none" stroke-dasharray="6,4"/>
<path d="M969.3,710.4H980.6" stroke="#000080" stroke-width="1" fill="none" />
<path d="M984.5,710.4H1018" stroke="#000080" stroke-width="1" fill="none" stroke-dasharray="6,4"/>
<path d="M981.1,718.2H1011 L1016,721.7 M981.1,719.6H1010 M981.1,718.2 L978.5,721.5 V739" stroke="#000080" stroke-width="1" fill="none" />
<path d="M978.5,739 L978.5,747" stroke="#0000ff" stroke-width="1" fill="none" />
<path d="M978.5,747.0 L978.5,751.0 L987.5,755.5 L969.5,765.0 L987.5,774.3 L969.5,783.7 L978.5,788.2 L978.5,792.0" stroke="#000080" stroke-width="1" fill="none" />
<path d="M978.5,792 L978.5,821.3" stroke="#0000ff" stroke-width="1" fill="none" />
<path d="M955.2,821.3V858.5" stroke="#000080" stroke-width="1" fill="none" />
<path d="M959.5,816.2V827 M959.5,835V844.4 M959.5,852.5V863.2" stroke="#000080" stroke-width="1" fill="none" />
<path d="M959.5,821.3H978.5 M978.5,821.3V840.2 M959.5,840.2H964 M964,837.7 L975.3,839.5 L978.5,840.2 L975.3,840.9 L964,842.6 Z" stroke="#000080" stroke-width="1" fill="none" />
<path d="M959.5,858.5H978.5" stroke="#000080" stroke-width="1" fill="none" />
<path d="M978.5,858.5 L978.5,932.5" stroke="#0000ff" stroke-width="1" fill="none" />
<rect x="976.0" y="930.0" width="5" height="5" fill="#0000ff"/>
<path d="M978.5,932.5 L978.5,942.4" stroke="#0000ff" stroke-width="1" fill="none" />
<path d="M967.2,942.4H988.9L978.4,952.3Z" stroke="#0000ff" stroke-width="1" fill="none" />
<path d="M765.2,840 L765.2,858.5 L941.6,858.5" stroke="#0000ff" stroke-width="1" fill="none" />
<circle cx="782.9" cy="811.8" r="27.7" stroke="#000080" fill="none"/>
<rect x="771.1" y="802.4" width="24.9" height="3" stroke="#000080" fill="none"/>
<path d="M755.3,812.3H766.2" stroke="#000080" stroke-width="1" fill="none" />
<path d="M769.9,812.3H806" stroke="#000080" stroke-width="1" fill="none" stroke-dasharray="6.2,3.2"/>
<path d="M768.8,819.6H797.5 L802.8,823.8 M768.8,821.1H797 M768.8,819.6 L765.2,823.2 V840" stroke="#000080" stroke-width="1" fill="none" />
<path d="M634.2,804.1 H673.8 L681.1,812.3 L673.8,820.6 H634.2 Z" stroke="#0000ff" stroke-width="1" fill="none" />
<path d="M681.1,812.3 L700.1,812.3" stroke="#0000ff" stroke-width="1" fill="none" />
<rect x="687.8" y="809.8" width="5" height="5" fill="#0000ff"/>
<path d="M700.1,812.3 L704.1,812.3 L708.8,803.3 L718.3,821.3 L727.9,803.3 L737.3,821.3 L742.1,812.3 L746.1,812.3" stroke="#000080" stroke-width="1" fill="none" />
<path d="M746.2,812.3 L756.3,812.3" stroke="#0000ff" stroke-width="1" fill="none" />
<path d="M690.3,812.3 L690.3,872.4" stroke="#0000ff" stroke-width="1" fill="none" />
<circle cx="523.5" cy="890.4" r="18" stroke="#000080" fill="none"/>
<path d="M518.5,879.8H528.5 M523.5,874.5V884.5 M518.5,902.2H528.5" stroke="#000080" stroke-width="1" fill="none" />
<path d="M523.5,829.4 L531.8,837.2 V858.7 H515.2 V837.2 Z" stroke="#0000ff" stroke-width="1" fill="none" />
<path d="M523.5,858.7 L523.5,872.4" stroke="#0000ff" stroke-width="1" fill="none" />
<path d="M523.5,908.4 L523.5,932.5" stroke="#0000ff" stroke-width="1" fill="none" />
<circle cx="579.5" cy="890.4" r="18" stroke="#000080" fill="none"/>
<path d="M574.5,879.8H584.5 M579.5,874.5V884.5 M574.5,902.2H584.5" stroke="#000080" stroke-width="1" fill="none" />
<path d="M579.5,829.4 L587.8,837.2 V858.7 H571.2 V837.2 Z" stroke="#0000ff" stroke-width="1" fill="none" />
<path d="M579.5,858.7 L579.5,872.4" stroke="#0000ff" stroke-width="1" fill="none" />
<path d="M579.5,908.4 L579.5,932.5" stroke="#0000ff" stroke-width="1" fill="none" />
<circle cx="635.4" cy="890.4" r="18" stroke="#000080" fill="none"/>
<path d="M630.4,879.8H640.4 M635.4,874.5V884.5 M630.4,902.2H640.4" stroke="#000080" stroke-width="1" fill="none" />
<path d="M635.4,829.4 L643.6999999999999,837.2 V858.7 H627.1 V837.2 Z" stroke="#0000ff" stroke-width="1" fill="none" />
<path d="M635.4,858.7 L635.4,872.4" stroke="#0000ff" stroke-width="1" fill="none" />
<path d="M635.4,908.4 L635.4,932.5" stroke="#0000ff" stroke-width="1" fill="none" />
<circle cx="690.4" cy="890.4" r="18" stroke="#000080" fill="none"/>
<path d="M685.4,879.8H695.4 M690.4,874.5V884.5 M685.4,902.2H695.4" stroke="#000080" stroke-width="1" fill="none" />
<path d="M690.4,908.4 L690.4,932.5" stroke="#0000ff" stroke-width="1" fill="none" />
<rect x="577.0" y="930.0" width="5" height="5" fill="#0000ff"/>
<rect x="632.9" y="930.0" width="5" height="5" fill="#0000ff"/>
<rect x="687.9" y="930.0" width="5" height="5" fill="#0000ff"/>
<path d="M523.5,932.5 L1108.3,932.5 L1108.3,922.8" stroke="#0000ff" stroke-width="1" fill="none" />
<rect x="1030.8" y="930.0" width="5" height="5" fill="#0000ff"/>
<path d="M1033.3,932.5 L1033.3,923.4" stroke="#0000ff" stroke-width="1" fill="none" />
<path d="M1033.3,858.2 L1033.3,877.2" stroke="#0000ff" stroke-width="1" fill="none" />
<path d="M1033.3,877.2 C1039,877.5 1043,882 1043,886.5 C1043,890 1040,892.5 1033.3,893 M1033.3,893 C1029,890 1026.5,891.5 1026.5,893 C1026.5,894.5 1029,896 1033.3,893 M1033.3,893 C1040,893.5 1043,896.5 1043,900 C1043,903.5 1040,906.5 1033.3,907.1 M1033.3,907.1 C1029,904 1026.5,905.5 1026.5,907.1 C1026.5,908.5 1029,910 1033.3,907.1 M1033.3,907.1 C1040,907.5 1043,910.5 1043,914 C1043,918 1040,921 1033.3,923.4" stroke="#000080" stroke-width="1" fill="none" />
<circle cx="1028.4" cy="915.6" r="2" stroke="#000080" fill="none"/>
<path d="M1033.3,858.2 L1108.3,858.2 L1108.3,876.9" stroke="#0000ff" stroke-width="1" fill="none" />
<rect x="1105.8" y="855.7" width="5" height="5" fill="#0000ff"/>
<path d="M1108.3,876.9 L1108.3,880.9 L1099.3,885.4 L1117.3,894.9 L1099.3,904.2 L1117.3,913.6 L1108.3,918.1 L1108.3,921.9" stroke="#000080" stroke-width="1" fill="none" />
<path d="M1108.3,858.2 L1108.3,849.2" stroke="#0000ff" stroke-width="1" fill="none" />
<path d="M1108.3,792.6 L1116.4,800.4 V849.2 H1100.2 V800.4 Z" stroke="#0000ff" stroke-width="1" fill="none" /></g>
<g fill="#000" stroke="#000" stroke-width="0.45" style="font-family:'Liberation Sans',sans-serif;font-size:12px;letter-spacing:1.3px"><text x="0" y="0" text-anchor="middle" transform="translate(861.6999999999999,672.5) rotate(-90)">Vb</text>
<text x="0" y="0" text-anchor="middle" transform="translate(787.8,589.5) rotate(-90)">Va</text>
<text x="1096.4" y="704.6999999999999" textLength="17.3" lengthAdjust="spacing">Vs</text>
<text x="1096.2" y="575.8" textLength="17.3" lengthAdjust="spacing">Va</text>
<text x="637.1" y="816.5" textLength="35.9" lengthAdjust="spacing">Input</text>
<text x="0" y="0" text-anchor="middle" transform="translate(527.8,847.5) rotate(-90)">Va</text>
<text x="0" y="0" text-anchor="middle" transform="translate(583.8,847.5) rotate(-90)">Vs</text>
<text x="0" y="0" text-anchor="middle" transform="translate(639.6999999999999,847.5) rotate(-90)">Vb</text>
<text x="0" y="0" text-anchor="middle" transform="translate(1112.6,824.8) rotate(-90)">Output</text>
<text x="753.1" y="636" textLength="17.9" lengthAdjust="spacing">R1</text>
<text x="747.9" y="657.1" textLength="23.1" lengthAdjust="spacing">18k</text>
<text x="808.8" y="636" textLength="17.9" lengthAdjust="spacing">R2</text>
<text x="795.8" y="657.1" textLength="30.9" lengthAdjust="spacing">100k</text>
<text x="753.1" y="729" textLength="17.9" lengthAdjust="spacing">R3</text>
<text x="747.9" y="749" textLength="23.1" lengthAdjust="spacing">18k</text>
<text x="867.7" y="718.7" textLength="26.2" lengthAdjust="spacing">R10</text>
<text x="868.8" y="739.8" textLength="35.0" lengthAdjust="spacing">1Meg</text>
<text x="910.7" y="598.8" textLength="18.3" lengthAdjust="spacing">R8</text>
<text x="897.7" y="619.9" textLength="31.3" lengthAdjust="spacing">150k</text>
<text x="910.7" y="672.6" textLength="18.3" lengthAdjust="spacing">R7</text>
<text x="897.7" y="693.9" textLength="31.3" lengthAdjust="spacing">150k</text>
<text x="911.1" y="746.6" textLength="18.1" lengthAdjust="spacing">R4</text>
<text x="905.2" y="768" textLength="24.0" lengthAdjust="spacing">33k</text>
<text x="902.8" y="895.9" textLength="26.4" lengthAdjust="spacing">R15</text>
<text x="904.7" y="915.9" textLength="24.5" lengthAdjust="spacing">180</text>
<text x="810.8" y="752.6" textLength="16.9" lengthAdjust="spacing">C1</text>
<text x="803.7" y="787.8" textLength="32.3" lengthAdjust="spacing">100n</text>
<text x="888.5" y="808.9" textLength="18.6" lengthAdjust="spacing">R9</text>
<text x="886.2" y="842.9" textLength="24.7" lengthAdjust="spacing">220</text>
<text x="1048.2" y="558" textLength="15.3" lengthAdjust="spacing">L1</text>
<text x="1045.4" y="590.8" textLength="23.1" lengthAdjust="spacing">150</text>
<text x="1000.3" y="668.3" textLength="16.8" lengthAdjust="spacing">U3</text>
<text x="981.4" y="751.5" textLength="32.3" lengthAdjust="spacing">GU50</text>
<text x="1046.6" y="687.3" textLength="18.1" lengthAdjust="spacing">R6</text>
<text x="1044.7" y="721.8" textLength="24.2" lengthAdjust="spacing">100</text>
<text x="988.3" y="765.2" textLength="17.6" lengthAdjust="spacing">R5</text>
<text x="989.5" y="786.6" textLength="6.9" lengthAdjust="spacing">1</text>
<text x="940.3" y="812.2" textLength="63.2" lengthAdjust="spacing">FQB11P06</text>
<text x="981.3" y="853.6" textLength="19.6" lengthAdjust="spacing">M2</text>
<text x="1044.3" y="895.7" textLength="15.5" lengthAdjust="spacing">L2</text>
<text x="1044.3" y="918.8" textLength="35.4" lengthAdjust="spacing">400m</text>
<text x="1069.6" y="895.7" textLength="25.8" lengthAdjust="spacing">R40</text>
<text x="1087.3" y="915.6" textLength="8.1" lengthAdjust="spacing">8</text>
<text x="709.2" y="798.4" textLength="25.9" lengthAdjust="spacing">R13</text>
<text x="714.9" y="833.7" textLength="14.8" lengthAdjust="spacing">1k</text>
<text x="805.2" y="838.4" textLength="16.5" lengthAdjust="spacing">U1</text>
<text x="768.1" y="853.5" textLength="39.5" lengthAdjust="spacing">ECC88</text>
<text x="666.5" y="870.8" textLength="17.2" lengthAdjust="spacing">V1</text>
<text x="536.2" y="918.7" textLength="24.5" lengthAdjust="spacing">430</text>
<text x="592.0" y="918.7" textLength="24.8" lengthAdjust="spacing">200</text>
<text x="648.1" y="918.7" textLength="17.2" lengthAdjust="spacing">49</text>
<text x="664.2" y="928.1" textLength="127.0" lengthAdjust="spacing">SINE(0 1.55 {Freq})</text>
<text x="545" y="898" style="font-size:5px;letter-spacing:0.3px">V=T3</text>
<text x="601" y="898" style="font-size:5px;letter-spacing:0.3px">V=T2</text>
<text x="657" y="898" style="font-size:5px;letter-spacing:0.3px">V=T1</text>
<text x="715" y="906" style="font-size:5px;letter-spacing:0.3px">AC 1.0</text>
<text x="1139.3" y="584.8" textLength="104.3" lengthAdjust="spacing">.option noopiter</text>
<text x="1139.3" y="601.0" textLength="147.7" lengthAdjust="spacing">.options plotwinsize=0</text>
<text x="1139.3" y="617.2" textLength="132.5" lengthAdjust="spacing">;.ac oct 100 10 100k</text>
<text x="1139.3" y="633.4" textLength="217.7" lengthAdjust="spacing">;.step param R 52.1m 52.2m .01m</text>
<text x="1139.3" y="649.6" textLength="111.1" lengthAdjust="spacing">;.param T=100-R</text>
<text x="1139.3" y="682.0" textLength="83.2" lengthAdjust="spacing">.INC GU50.inc</text>
<text x="1139.3" y="698.2" textLength="90.4" lengthAdjust="spacing">.INC ECC88.inc</text>
<text x="1139.3" y="730.6" textLength="103.2" lengthAdjust="spacing">.param Freq=1k</text>
<text x="1139.3" y="746.8" textLength="119.3" lengthAdjust="spacing">.param FFT=16384</text>
<text x="1139.3" y="763.0" textLength="273.0" lengthAdjust="spacing">.tran 0 {14/Freq} {9/Freq} {14/Freq/FFT}</text>
<text x="1139.3" y="779.2" textLength="171.7" lengthAdjust="spacing">.four {Freq} V(Output) 5 5</text>
<text x="1139.3" y="811.6" textLength="118.5" lengthAdjust="spacing">K1 L1 L2 0.999995</text>
<text x="1139.3" y="844.0" textLength="188.7" lengthAdjust="spacing">;Rout = 9.3 Ohm &gt; DF = 0.85</text>
<text x="1139.3" y="860.2" textLength="205.4" lengthAdjust="spacing">;1 Wrms @2% THD @205 mVrms</text>
<text x="1139.3" y="876.4" textLength="206.3" lengthAdjust="spacing">;20 Wrms @15% THD @1.1 Vrms</text></g>

</svg>
</body></html>
